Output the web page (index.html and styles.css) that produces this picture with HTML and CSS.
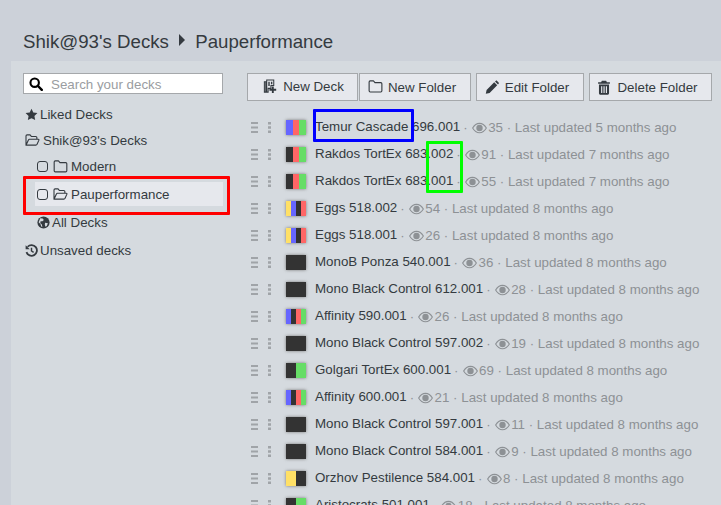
FILE: index.html
```html
<!DOCTYPE html>
<html lang="en">
<head>
    <meta charset="UTF-8">
    <meta name="viewport" content="width=device-width, initial-scale=1.0">
    <title>Pauperformance</title>
    <link rel="stylesheet" href="styles.css">
</head>
<body>
    <svg class="defs" width="0" height="0">
        <symbol id="i-search" viewBox="0 0 16 16"><circle cx="6.5" cy="6.5" r="4.8" fill="none" stroke="currentColor" stroke-width="2.4"/><path d="M10 10l4.6 4.6" stroke="currentColor" stroke-width="2.8" stroke-linecap="round"/></symbol>
        <symbol id="i-star" viewBox="0 0 16 16"><path d="M8 .8l2.2 4.7 5.1.7-3.7 3.6.9 5.1L8 12.5l-4.5 2.4.9-5.1L.7 6.2l5.1-.7z" fill="currentColor"/></symbol>
        <symbol id="i-open" viewBox="0 0 16 14"><path d="M1 12V2.2C1 1.5 1.5 1 2.2 1h3.2l1.5 1.7h4.6c.7 0 1.2.5 1.2 1.2v1.6M1 12l2.6-5.6c.2-.5.6-.8 1.1-.8h9.6c.5 0 .8.5.6 1l-2.1 4.6c-.2.5-.7.8-1.2.8z" fill="none" stroke="currentColor" stroke-width="1.2" stroke-linejoin="round"/></symbol>
        <symbol id="i-folder" viewBox="0 0 16 14"><path d="M1.2 2.2C1.2 1.5 1.7 1 2.4 1h3.4l1.6 1.8h6.2c.7 0 1.2.5 1.2 1.2v7.6c0 .7-.5 1.2-1.2 1.2H2.4c-.7 0-1.2-.5-1.2-1.2z" fill="none" stroke="currentColor" stroke-width="1.2" stroke-linejoin="round"/></symbol>
        <symbol id="i-globe" viewBox="0 0 16 16"><circle cx="8" cy="8" r="7.500" fill="currentColor"/><path d="M4 2.800l3 .4 1.400 1.600-1.600 1.600-2.400.2-.4 2.200 2 1.800.6 2.800-1.400-.6-1-3-2.200-2.200zM10 8.400l3.400.4-1.400 3.400-1.600 1-.8-2.600z" fill="#d5dadf"/></symbol>
        <symbol id="i-history" viewBox="0 0 16 16"><path d="M3.200 3.400A6.600 6.600 0 1 1 1.800 10" fill="none" stroke="currentColor" stroke-width="2.200"/><path d="M.8 1.400v5h5z" fill="currentColor"/><path d="M8 4.600v4l2.600 1.800" fill="none" stroke="currentColor" stroke-width="1.800"/></symbol>
        <symbol id="i-eye" viewBox="0 0 16 12"><path d="M.7 6C2.600 2.700 5.100 1 8 1s5.400 1.700 7.300 5c-1.900 3.300-4.400 5-7.300 5S2.600 9.300.7 6z" fill="none" stroke="currentColor" stroke-width="1.200"/><circle cx="8" cy="6" r="3.400" fill="currentColor"/></symbol>
        <symbol id="i-pencil" viewBox="0 0 14 14"><path d="M.8 13.200l.8-3.800 7.600-7.600 3 3-7.600 7.600zM10 1l.7-.6c.4-.4 1-.4 1.400 0l1.500 1.500c.4.400.4 1 0 1.400l-.6.700z" fill="currentColor"/></symbol>
        <symbol id="i-trash" viewBox="0 0 12 14"><path d="M4 .6h4l.7 1.400H11.500v1.500H.5V2h2.800zM1.300 4.300h9.400v8c0 .8-.6 1.400-1.400 1.400H2.700c-.8 0-1.400-.6-1.400-1.400zM3.300 5.800v6.300h1.100V5.800zM5.500 5.800v6.300h1.100V5.800zM7.700 5.800v6.300h1.100V5.800z" fill="currentColor" fill-rule="evenodd"/></symbol>
        <symbol id="i-deck" viewBox="0 0 14 16"><path d="M3.500 1h7.500v6H8v3H5v4H3.500zM1 3h1.500v11H1z" fill="none" stroke="currentColor" stroke-width="1.100"/><path d="M5.200 3h1.500v4.500H5.200zM8 3h1.500v2.500H8z" fill="currentColor"/><path d="M9 8h2v2.500h2.600v2H11V15H9v-2.500H6.400v-2H9z" fill="currentColor"/></symbol>
        <symbol id="i-bars" viewBox="0 0 7 11"><path d="M0 0h7v2H0zM0 4.500h7v2H0zM0 9h7v2H0z" fill="currentColor"/></symbol>
        <symbol id="i-dots" viewBox="0 0 3 11"><path d="M0 0h3v2.500H0zM0 4.200h3v2.500H0zM0 8.500h3V11H0z" fill="currentColor"/></symbol>
    </svg>

    <h1 class="crumbs">Shik@93's Decks <span class="crumb-arrow"></span> Pauperformance</h1>

    <div class="panel">
        <div class="sidebar">
            <div class="search">
                <svg class="search-icon"><use href="#i-search"/></svg>
                <span>Search your decks</span>
            </div>
            <ul class="tree">
                <li class="tree-item"><svg class="ico"><use href="#i-star"/></svg>Liked Decks</li>
                <li class="tree-item"><svg class="ico wide"><use href="#i-open"/></svg>Shik@93's Decks</li>
                <li class="tree-item sub"><span class="check"></span><svg class="ico wide"><use href="#i-folder"/></svg>Modern</li>
                <li class="tree-item sub active"><span class="check"></span><svg class="ico wide"><use href="#i-open"/></svg>Pauperformance</li>
                <li class="tree-item sub"><svg class="ico"><use href="#i-globe"/></svg>All Decks</li>
                <li class="tree-item last"><svg class="ico"><use href="#i-history"/></svg>Unsaved decks</li>
            </ul>
        </div>

        <div class="content">
            <div class="toolbar">
                <button class="btn btn-deck"><svg class="ico"><use href="#i-deck"/></svg>New Deck</button>
                <button class="btn btn-new"><svg class="ico wide"><use href="#i-folder"/></svg>New Folder</button>
                <button class="btn btn-edit"><svg class="ico"><use href="#i-pencil"/></svg>Edit Folder</button>
                <button class="btn btn-del"><svg class="ico"><use href="#i-trash"/></svg>Delete Folder</button>
            </div>

            <ul class="decks">
                <li class="deck"><svg class="bars"><use href="#i-bars"/></svg><svg class="dots"><use href="#i-dots"/></svg><span class="thumb"><i class="u"></i><i class="r"></i><i class="g"></i></span><span class="name">Temur Cascade 696.001</span><span class="meta">·<svg class="eye"><use href="#i-eye"/></svg>35 · Last updated 5 months ago</span></li>
                <li class="deck"><svg class="bars"><use href="#i-bars"/></svg><svg class="dots"><use href="#i-dots"/></svg><span class="thumb"><i class="b"></i><i class="r"></i><i class="g"></i></span><span class="name">Rakdos TortEx 683.002</span><span class="meta">·<svg class="eye"><use href="#i-eye"/></svg>91 · Last updated 7 months ago</span></li>
                <li class="deck"><svg class="bars"><use href="#i-bars"/></svg><svg class="dots"><use href="#i-dots"/></svg><span class="thumb"><i class="b"></i><i class="r"></i><i class="g"></i></span><span class="name">Rakdos TortEx 683.001</span><span class="meta">·<svg class="eye"><use href="#i-eye"/></svg>55 · Last updated 7 months ago</span></li>
                <li class="deck"><svg class="bars"><use href="#i-bars"/></svg><svg class="dots"><use href="#i-dots"/></svg><span class="thumb"><i class="w"></i><i class="u"></i><i class="b"></i><i class="r"></i></span><span class="name">Eggs 518.002</span><span class="meta">·<svg class="eye"><use href="#i-eye"/></svg>54 · Last updated 8 months ago</span></li>
                <li class="deck"><svg class="bars"><use href="#i-bars"/></svg><svg class="dots"><use href="#i-dots"/></svg><span class="thumb"><i class="w"></i><i class="u"></i><i class="b"></i><i class="r"></i></span><span class="name">Eggs 518.001</span><span class="meta">·<svg class="eye"><use href="#i-eye"/></svg>26 · Last updated 8 months ago</span></li>
                <li class="deck"><svg class="bars"><use href="#i-bars"/></svg><svg class="dots"><use href="#i-dots"/></svg><span class="thumb"><i class="b"></i></span><span class="name">MonoB Ponza 540.001</span><span class="meta">·<svg class="eye"><use href="#i-eye"/></svg>36 · Last updated 8 months ago</span></li>
                <li class="deck"><svg class="bars"><use href="#i-bars"/></svg><svg class="dots"><use href="#i-dots"/></svg><span class="thumb"><i class="b"></i></span><span class="name">Mono Black Control 612.001</span><span class="meta">·<svg class="eye"><use href="#i-eye"/></svg>28 · Last updated 8 months ago</span></li>
                <li class="deck"><svg class="bars"><use href="#i-bars"/></svg><svg class="dots"><use href="#i-dots"/></svg><span class="thumb"><i class="u"></i><i class="b"></i><i class="r"></i><i class="g"></i></span><span class="name">Affinity 590.001</span><span class="meta">·<svg class="eye"><use href="#i-eye"/></svg>26 · Last updated 8 months ago</span></li>
                <li class="deck"><svg class="bars"><use href="#i-bars"/></svg><svg class="dots"><use href="#i-dots"/></svg><span class="thumb"><i class="b"></i></span><span class="name">Mono Black Control 597.002</span><span class="meta">·<svg class="eye"><use href="#i-eye"/></svg>19 · Last updated 8 months ago</span></li>
                <li class="deck"><svg class="bars"><use href="#i-bars"/></svg><svg class="dots"><use href="#i-dots"/></svg><span class="thumb"><i class="b"></i><i class="g"></i></span><span class="name">Golgari TortEx 600.001</span><span class="meta">·<svg class="eye"><use href="#i-eye"/></svg>69 · Last updated 8 months ago</span></li>
                <li class="deck"><svg class="bars"><use href="#i-bars"/></svg><svg class="dots"><use href="#i-dots"/></svg><span class="thumb"><i class="u"></i><i class="b"></i><i class="r"></i><i class="g"></i></span><span class="name">Affinity 600.001</span><span class="meta">·<svg class="eye"><use href="#i-eye"/></svg>21 · Last updated 8 months ago</span></li>
                <li class="deck"><svg class="bars"><use href="#i-bars"/></svg><svg class="dots"><use href="#i-dots"/></svg><span class="thumb"><i class="b"></i></span><span class="name">Mono Black Control 597.001</span><span class="meta">·<svg class="eye"><use href="#i-eye"/></svg>11 · Last updated 8 months ago</span></li>
                <li class="deck"><svg class="bars"><use href="#i-bars"/></svg><svg class="dots"><use href="#i-dots"/></svg><span class="thumb"><i class="b"></i></span><span class="name">Mono Black Control 584.001</span><span class="meta">·<svg class="eye"><use href="#i-eye"/></svg>9 · Last updated 8 months ago</span></li>
                <li class="deck"><svg class="bars"><use href="#i-bars"/></svg><svg class="dots"><use href="#i-dots"/></svg><span class="thumb"><i class="w"></i><i class="b"></i></span><span class="name">Orzhov Pestilence 584.001</span><span class="meta">·<svg class="eye"><use href="#i-eye"/></svg>8 · Last updated 8 months ago</span></li>
                <li class="deck"><svg class="bars"><use href="#i-bars"/></svg><svg class="dots"><use href="#i-dots"/></svg><span class="thumb"><i class="b"></i><i class="g"></i></span><span class="name">Aristocrats 501.001</span><span class="meta">·<svg class="eye"><use href="#i-eye"/></svg>18 · Last updated 8 months ago</span></li>
            </ul>
        </div>
    </div>

    <!-- screenshot annotations -->
    <div class="mark mark-red"></div>
    <div class="mark mark-blue"></div>
    <div class="mark mark-green"></div>
</body>
</html>
```

FILE: styles.css
```css
html, body {
    height: 100%;
}
body {
    font-family: 'Liberation Sans', Arial, sans-serif;
    font-size: 13.33px;
    color: #343a40;
    margin: 0;
    width: 721px;
    height: 505px;
    overflow: hidden;
    position: relative;
    background-color: #ccd1d9;
}
.defs {
    position: absolute;
}
ul {
    list-style: none;
    margin: 0;
    padding: 0;
}
.crumbs {
    margin: 0;
    height: 61px;
    padding: 31px 0 0 23px;
    box-sizing: border-box;
    font-size: 18.67px;
    line-height: 22px;
    font-weight: normal;
}
.crumb-arrow {
    display: inline-block;
    width: 0;
    height: 0;
    margin: 0 5px 2px 5px;
    border-left: 6px solid #343a40;
    border-top: 6px solid transparent;
    border-bottom: 6px solid transparent;
}
.panel {
    display: flex;
    margin-left: 11px;
    height: 444px;
    background-color: #d5dadf;
}
.sidebar {
    width: 212px;
    padding: 12px 0 0 12px;
    box-sizing: border-box;
}
.search {
    display: flex;
    align-items: center;
    width: 200px;
    height: 21px;
    padding-top: 1px;
    box-sizing: border-box;
    background: #fff;
    border: 1px solid #a5a8ab;
    color: #9a9da1;
}
.search-icon {
    width: 14px;
    height: 14px;
    margin: -1px 8px 0 5px;
    color: #000;
}
.tree {
    margin-top: 7px;
}
.tree-item {
    display: flex;
    align-items: center;
    height: 26px;
    padding-left: 2px;
}
.tree-item.sub {
    margin-left: 12px;
    padding-left: 2px;
}
.tree-item.active {
    height: 24px;
    margin: 3px 0 3px 12px;
    background-color: #e6e8ed;
}
.tree-item.last {
    margin-top: 2px;
}
.ico {
    width: 13px;
    height: 13px;
    margin-right: 2px;
    flex: none;
}
.ico.wide {
    width: 15px;
    margin-right: 3px;
}
.check {
    width: 9px;
    height: 9px;
    margin-right: 5px;
    border: 1px solid #343a40;
    border-radius: 3px;
    flex: none;
}
.content {
    padding: 12px 0 0 24px;
    width: 474px;
    box-sizing: border-box;
}
.toolbar {
    display: flex;
}
.btn {
    display: flex;
    align-items: center;
    justify-content: center;
    height: 28px;
    padding: 1px 0 0;
    background-color: #e6e8ed;
    border: 1px solid #a5a8ab;
    font: inherit;
    color: inherit;
    flex: none;
}
.btn .ico {
    margin-right: 6px;
    width: 14px;
    height: 15px;
}
.btn .ico.wide {
    width: 15px;
    margin: -3px 5px 0 0;
}
.btn-deck { width: 111px; padding: 0 0 1px 2px; }
.btn-new { width: 112px; margin-left: 1px; padding-right: 6px; }
.btn-edit { width: 108px; margin-left: 5px; padding-right: 6px; }
.btn-del { width: 123px; margin-left: 5px; padding-right: 6px; }
.decks {
    margin-top: 13px;
}
.deck {
    display: flex;
    align-items: center;
    height: 27px;
    white-space: nowrap;
    padding-left: 4px;
}
.bars {
    width: 7px;
    height: 11px;
    color: #a0a4a8;
    flex: none;
}
.dots {
    width: 3px;
    height: 11px;
    margin-left: 10px;
    color: #a0a4a8;
    flex: none;
}
.thumb {
    display: flex;
    width: 20px;
    height: 15px;
    margin-left: 15px;
    box-shadow: 0 0 3px #777;
    flex: none;
}
.thumb i {
    flex: 1;
}
.thumb .u { background-color: #6666ff; }
.thumb .r { background-color: #ff6666; }
.thumb .g { background-color: #66dd66; }
.thumb .b { background-color: #333333; }
.thumb .w { background-color: #ffe066; }
.name {
    margin-left: 9px;
    margin-bottom: 2px;
}
.meta {
    display: flex;
    align-items: center;
    margin-left: 3px;
    color: #8d9195;
}
.eye {
    width: 15px;
    height: 12px;
    margin: 0 1.5px 0 4px;
}
.mark {
    position: absolute;
    box-sizing: border-box;
    border: 3px solid;
    border-radius: 1px;
}
.mark-red {
    left: 23px;
    top: 176px;
    width: 207px;
    height: 39px;
    border-color: #ff0000;
}
.mark-blue {
    left: 313px;
    top: 109px;
    width: 101px;
    height: 33px;
    border-color: #0000ff;
}
.mark-green {
    left: 426px;
    top: 141px;
    width: 37px;
    height: 52px;
    border-color: #00ff00;
}
```
